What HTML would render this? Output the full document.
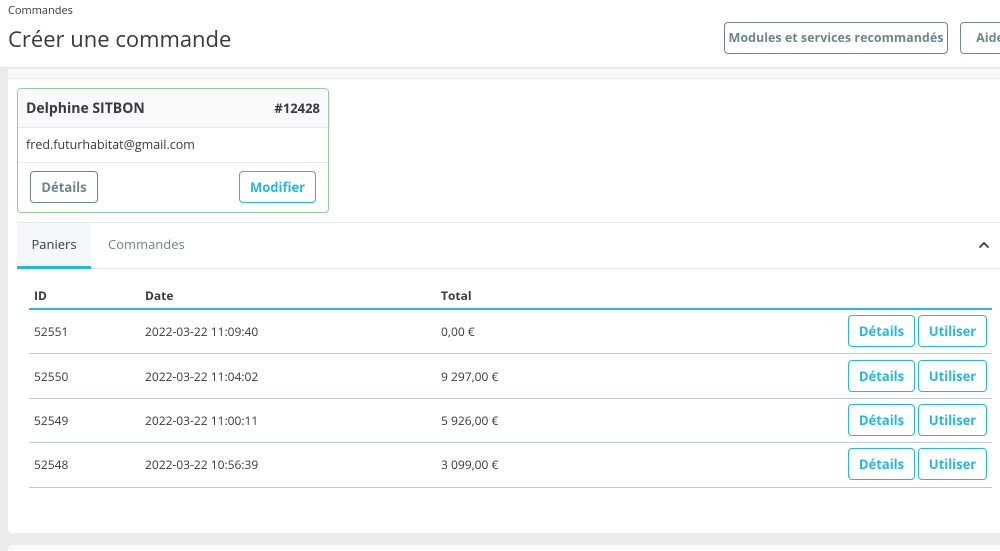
<!DOCTYPE html>
<html><head><meta charset="utf-8"><style>
*{box-sizing:border-box;margin:0;padding:0}
html,body{width:1000px;height:551px;overflow:hidden}
body{background:#eaebec;font-family:"Open Sans","Liberation Sans",sans-serif;color:#363a41;position:relative}
.hdr{position:absolute;left:0;top:0;width:1000px;height:68px;background:#fff;border-bottom:1px solid #dfe3e6}
.crumb{position:absolute;left:8px;top:3px;font-size:11px;color:#363a41}
.title{position:absolute;left:8px;top:24px;font-size:22px;color:#363a41}
.hb{position:absolute;top:22px;height:32px;border:1px solid #6c868e;border-radius:4px;color:#6c868e;font-weight:bold;font-size:12.5px;line-height:30px;padding:0 13px;background:#fff;white-space:nowrap;text-align:center}
.panel{position:absolute;left:8px;top:69px;width:1000px;height:464px;background:#fff;border-radius:4px}
.strip{position:absolute;left:0;top:0;right:0;height:10px;background:#f8f9fa;border-bottom:1px solid #e6e9eb}
.panel2{position:absolute;left:8px;top:545px;width:1000px;height:6px;background:#fafbfc;border-radius:4px 4px 0 0}
.card{position:absolute;left:17px;top:88px;width:312px;height:125px;border:1px solid #8fd19e;border-radius:4px;overflow:hidden;background:#fff}
.ch{height:39px;background:#f8f9fa;border-bottom:1px solid #e6e9eb;display:flex;justify-content:space-between;align-items:center;padding:0 8px;font-weight:bold}
.ch .n{font-size:14px}.ch .i{font-size:13px}
.em{height:35px;border-bottom:1px solid #e6e9eb;padding:0 8px;font-size:12.5px;line-height:34px}
.btn{position:absolute;height:32px;border:1px solid;border-radius:4px;font-weight:bold;font-size:13px;text-align:center;line-height:30px;background:#fff}
.g{border-color:#6c868e;color:#6c868e}.b{border-color:#25b9d7;color:#25b9d7}
.tabs{position:absolute;left:17px;top:222px;width:983px;height:47px;border-top:1px solid #e6e9eb;border-bottom:1px solid #dfe3e6}
.tab{position:absolute;top:0;height:45px;line-height:43px;font-size:13px}
.t1{left:0;width:74px;background:#f4f8fb;text-align:center;border-bottom:3px solid #25b9d7;height:46px}
.t2{left:91px;color:#6c868e}
.tx{position:absolute;font-size:12px}
.hd{font-weight:bold}
.ln{position:absolute;left:29px;width:963px;height:1px;background:#bbcdd2}
</style></head><body>
<div class="hdr">
<div class="crumb">Commandes</div>
<div class="title">Créer une commande</div>
<div class="hb" style="left:724px;width:224px;padding:0">Modules et services recommandés</div>
<div class="hb" style="left:960px;width:60px">Aide</div>
</div>
<div class="panel"><div class="strip"></div></div>
<div class="panel2"></div>
<div class="card">
<div class="ch"><span class="n">Delphine SITBON</span><span class="i">#12428</span></div>
<div class="em">fred.futurhabitat@gmail.com</div>
</div>
<div class="btn g" style="left:30px;top:171px;width:68px">Détails</div>
<div class="btn b" style="left:239px;top:171px;width:77px">Modifier</div>
<div class="tabs"><div class="tab t1">Paniers</div><div class="tab t2">Commandes</div>
<svg style="position:absolute;left:961px;top:18px" width="12" height="8" viewBox="0 0 12 8"><path d="M1.5 6.5L6 2l4.5 4.5" stroke="#363a41" stroke-width="1.8" fill="none"/></svg></div>
<div class="tx hd" style="left:34px;top:287px">ID</div>
<div class="tx hd" style="left:145px;top:287px">Date</div>
<div class="tx hd" style="left:441px;top:287px">Total</div>
<div style="position:absolute;left:29px;top:308px;width:963px;height:2px;background:#25b9d7"></div>
<div class="ln" style="top:353px"></div><div class="ln" style="top:398px"></div><div class="ln" style="top:442px"></div><div class="ln" style="top:487px"></div>

<div class="tx" style="left:34px;top:323px">52551</div><div class="tx" style="left:145px;top:323px">2022-03-22 11:09:40</div><div class="tx" style="left:441px;top:323px">0,00 €</div>
<div class="tx" style="left:34px;top:368px">52550</div><div class="tx" style="left:145px;top:368px">2022-03-22 11:04:02</div><div class="tx" style="left:441px;top:368px">9 297,00 €</div>
<div class="tx" style="left:34px;top:412px">52549</div><div class="tx" style="left:145px;top:412px">2022-03-22 11:00:11</div><div class="tx" style="left:441px;top:412px">5 926,00 €</div>
<div class="tx" style="left:34px;top:456px">52548</div><div class="tx" style="left:145px;top:456px">2022-03-22 10:56:39</div><div class="tx" style="left:441px;top:456px">3 099,00 €</div>

<div class="btn b" style="left:848px;top:315px;width:67px">Détails</div><div class="btn b" style="left:918px;top:315px;width:69px">Utiliser</div>
<div class="btn b" style="left:848px;top:360px;width:67px">Détails</div><div class="btn b" style="left:918px;top:360px;width:69px">Utiliser</div>
<div class="btn b" style="left:848px;top:404px;width:67px">Détails</div><div class="btn b" style="left:918px;top:404px;width:69px">Utiliser</div>
<div class="btn b" style="left:848px;top:448px;width:67px">Détails</div><div class="btn b" style="left:918px;top:448px;width:69px">Utiliser</div>
</body></html>
